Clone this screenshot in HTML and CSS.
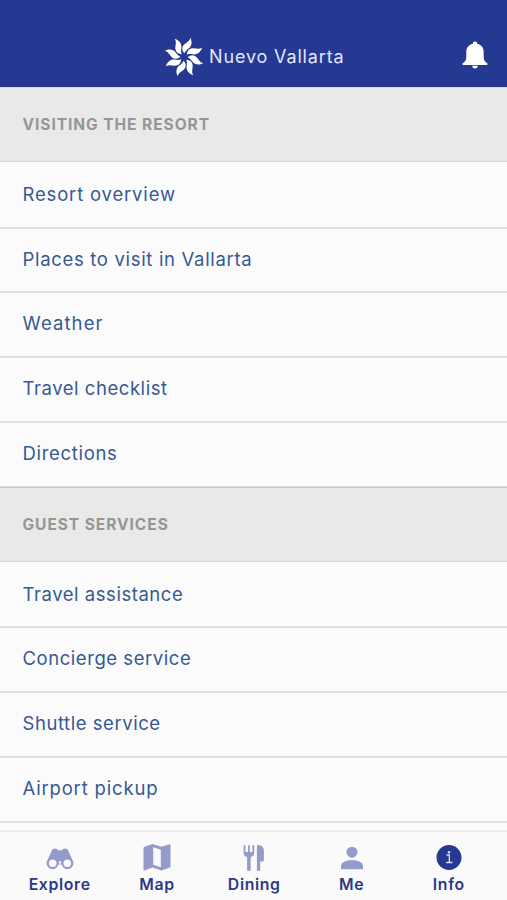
FILE: index.html
```html
<!DOCTYPE html>
<html lang="en">
<head>
<meta charset="utf-8">
<title>Nuevo Vallarta</title>
<link rel="stylesheet" href="styles.css">
</head>
<body>
<div class="app">
  <header class="header">
    <div class="brand">
      <svg class="logo" viewBox="-60 -60 120 120" fill="#fff">
        <defs><path id="petal" d="M1-11C-7-20-7-30 1-38C8-44 17-48 19-58C26-43 22-32 15-26C9-21 5-19 1-11Z"/></defs>
        <use href="#petal"/><use href="#petal" transform="rotate(45)"/><use href="#petal" transform="rotate(90)"/><use href="#petal" transform="rotate(135)"/><use href="#petal" transform="rotate(180)"/><use href="#petal" transform="rotate(225)"/><use href="#petal" transform="rotate(270)"/><use href="#petal" transform="rotate(315)"/>
      </svg>
      <span class="title">Nuevo Vallarta</span>
    </div>
    <svg class="bell" viewBox="0 0 26 28" fill="#fff"><path d="M10.700 2.700a2.300 2.300 0 0 1 4.600 0C19.500 3.700 21.700 6.800 21.700 11v5.500c0 2.700 1.200 4.300 3.500 5.700c.8.500.4 1.800-.6 1.800H1.400c-1 0-1.400-1.300-.6-1.800C3.100 20.800 4.300 19.200 4.300 16.500V11c0-4.200 2.200-7.300 6.400-8.300zM10.300 24.800h5.400a2.700 2.700 0 0 1-5.400 0z"/></svg>
  </header>
  <main class="content">
    <h2 class="section">VISITING THE RESORT</h2>
    <ul class="list">
      <li class="row loose">Resort overview</li>
      <li class="row medium">Places to visit in Vallarta</li>
      <li class="row wide">Weather</li>
      <li class="row">Travel checklist</li>
      <li class="row medium">Directions</li>
    </ul>
    <h2 class="section guest">GUEST SERVICES</h2>
    <ul class="list">
      <li class="row">Travel assistance</li>
      <li class="row">Concierge service</li>
      <li class="row">Shuttle service</li>
      <li class="row loose">Airport pickup</li>
    </ul>
  </main>
  <nav class="tabs">
    <a class="tab explore">
      <svg viewBox="0 0 28 28"><path fill="#949bca" d="M5.500 7.200Q6.200 4.200 9 4.400Q11.300 4.500 12 6.200H16Q16.700 4.500 19 4.400Q21.800 4.200 22.500 7.200L26.200 15.500A6 6 0 1 1 15.600 20.600H12.400A6 6 0 1 1 1.800 15.500Z"/><g fill="#fafafb"><circle cx="6.700" cy="19.300" r="3.800"/><circle cx="21.300" cy="19.300" r="3.800"/><circle cx="14" cy="18.500" r="1.200"/></g></svg>
      <span>Explore</span>
    </a>
    <a class="tab map">
      <svg viewBox="0 0 28 28"><path fill="#949bca" d="M.5 4Q.5 3 1.500 2.700L9.500 0L18.500 2.800L26.500.2Q27.500 0 27.500 1V22.500Q27.500 23.300 26.700 23.600L18.500 26.500L9.500 23.500L1.500 26.500Q.5 26.700 .5 25.700Z"/><path fill="#fafafb" d="M10.200 3.200L17.800 5.800V23.300L10.200 20.700Z"/></svg>
      <span>Map</span>
    </a>
    <a class="tab dining">
      <svg viewBox="0 0 28 28"><g fill="#949bca"><path d="M3.600 2Q3.600 1 4.500 1T5.400 2V8H8V2Q8 1 8.900 1T9.800 2V8H12.400V2Q12.400 1 13.300 1T14.200 2V9Q14.200 12.200 10.700 13V25.700Q10.700 27 8.900 27T7.100 25.700V13Q3.600 12.200 3.600 9Z"/><path d="M16.900 2Q16.900 1 17.900 1Q23.900 1.500 23.900 7V16Q23.900 17.500 22.400 17.500H20.200V25.700Q20.200 27 18.500 27T16.900 25.700Z"/></g></svg>
      <span>Dining</span>
    </a>
    <a class="tab me">
      <svg viewBox="0 0 28 28"><g fill="#949bca"><circle cx="14" cy="8.200" r="5.500"/><path d="M3 24.500V22C3 18 8 16.200 14 16.200S25 18 25 22V24.500Q25 25.200 24.300 25.200H3.700Q3 25.200 3 24.500Z"/></g></svg>
      <span>Me</span>
    </a>
    <a class="tab info">
      <svg viewBox="0 0 28 28"><circle cx="14" cy="13.500" r="12.500" fill="#253892"/><path d="M11.500 11H14.300V18.300M11.200 18.500H17.300" fill="none" stroke="#dce2ff" stroke-width="1.300"/><circle cx="14" cy="8.200" r="1.200" fill="#dce2ff"/></svg>
      <span>Info</span>
    </a>
  </nav>
</div>
</body>
</html>
```
FILE: styles.css
```css
* { box-sizing: border-box; }
body { margin: 0; font-family: Inter, "Liberation Sans", sans-serif; background: #fbfbfb; }
.app { height: 900px; display: flex; flex-direction: column; overflow: hidden; }
.header { height: 87px; flex: none; background: #253892; display: grid; grid-template-columns: 1fr auto; align-items: start; padding: 37px 19px 0 164px; }
.brand { display: flex; align-items: center; gap: 5px; height: 40px; }
.logo { width: 40px; height: 40px; }
.title { color: #e0e7ff; font-size: 18px; letter-spacing: .85px; line-height: 24px; }
.bell { width: 26px; height: 28px; margin-top: 4px; }
.content { flex: 1; min-height: 0; overflow: hidden; }
.section { margin: 0; height: 75px; background: #e9e9e9; border-top: 1px solid #dcdce8; border-bottom: 1px solid #d8d8d8; padding-left: 22.500px; font-size: 15.500px; font-weight: 700; color: #969696; letter-spacing: .95px; line-height: 74px; }
.guest { border-top-color: #c8c8c8; margin-top: -1px; }
.list { margin: 0; padding: 0; list-style: none; }
.row { height: 64.800px; border-bottom: 2px solid #e0e0e0; padding-left: 22.500px; font-size: 18.500px; line-height: 61px; color: #365993; letter-spacing: .55px; }
.row:first-child { height: 66.500px; line-height: 64px; }
.medium { letter-spacing: .68px; }
.loose { letter-spacing: .82px; }
.wide { letter-spacing: 1.100px; }
.tabs { height: 70px; flex: none; background: #fafafb; border-top: 2px solid #ededed; display: grid; grid-template-columns: repeat(5, 97.300px); justify-content: start; padding: 12px 0 0 11px; }
.tab { display: flex; flex-direction: column; align-items: center; color: #2c3787; font-size: 15.800px; font-weight: 600; line-height: 20px; letter-spacing: .65px; }
.tab svg { width: 28px; height: 28px; margin-bottom: 3px; }
```
